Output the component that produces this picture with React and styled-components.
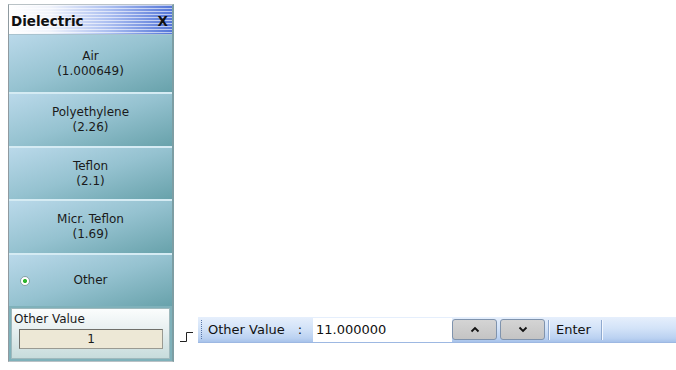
import React from "react";
import styled, { createGlobalStyle } from "styled-components";

const Global = createGlobalStyle`
  html, body { margin: 0; padding: 0; background: #ffffff; }
  body { font-family: "DejaVu Sans", "Liberation Sans", sans-serif; }
`;

const Page = styled.div`
  width: 676px;
  height: 370px;
  display: flex;
  align-items: flex-end;
  padding: 4px 0 8px 8px;
  box-sizing: border-box;
  overflow: hidden;
`;

const Panel = styled.div`
  width: 166px;
  height: 358px;
  display: flex;
  flex-direction: column;
  box-sizing: border-box;
  border: 1px solid #b9c2c6;
  border-left: 1px solid #8f9aa0;
  border-right: 2px solid #7d9ea4;
  background: #7fb1ba;
`;

const TitleBar = styled.div`
  height: 30px;
  flex: none;
  box-sizing: border-box;
  display: flex;
  align-items: center;
  justify-content: space-between;
  padding: 2px 4px 0 2px;
  font-weight: bold;
  font-size: 13.5px;
  color: #111;
  background:
    repeating-linear-gradient(to bottom, rgba(255,255,255,0.6) 0 1px, rgba(255,255,255,0) 1px 3px),
    linear-gradient(to right, #ffffff 0%, #f0f3fb 25%, #a9bdf0 62%, #5476d8 100%);
  border-bottom: 1px solid #a9c3cf;
`;

const Choice = styled.div`
  height: ${p => p.$h}px;
  flex: none;
  box-sizing: border-box;
  display: flex;
  flex-direction: column;
  align-items: center;
  justify-content: center;
  position: relative;
  font-size: 12px;
  line-height: 15px;
  color: #1a1a1a;
  background: linear-gradient(to bottom right, #bad9ea 0%, #95c2d0 50%, #68a2ab 100%);
  border-top: ${p => (p.$first ? "0" : "2px solid #d5ebf3")};
`;

const Radio = styled.span`
  position: absolute;
  left: 11px;
  top: 50%;
  margin-top: -5px;
  width: 8px;
  height: 8px;
  border-radius: 50%;
  border: 1px solid #8aa2a8;
  background: radial-gradient(circle, #2fb52f 0 1.8px, #ffffff 2.3px);
`;

const ValueBox = styled.div`
  flex: 1;
  margin: 2px;
  border: 1px solid #9fb9bd;
  background: linear-gradient(to bottom, #fbfdfd 0%, #e8f0f1 40%, #c7dcdc 100%);
  display: flex;
  flex-direction: column;
  padding: 3px 6px 4px 2px;
  font-size: 12px;
  color: #1a1a1a;
`;

const ValueField = styled.div`
  margin-top: 3px;
  margin-left: 5px;
  height: 18px;
  border: 1px solid #9a9a92;
  border-top-color: #6f6f6a;
  border-left-color: #6f6f6a;
  background: #ede8d6;
  display: flex;
  align-items: center;
  justify-content: center;
  font-size: 12px;
`;

const Connector = styled.svg`
  flex: none;
  margin: 0 0 19px 6px;
`;

const Toolbar = styled.div`
  flex: 1;
  height: 26px;
  margin: 0 0 19px 5px;
  display: flex;
  align-items: center;
  box-sizing: border-box;
  background: linear-gradient(to bottom, #e6effc 0%, #d3e3f8 45%, #bad1f1 85%, #a7c2ea 100%);
  border-bottom: 1px solid #9db8e2;
  font-size: 13px;
  color: #111;
`;

const Grip = styled.span`
  width: 0;
  height: 19px;
  margin: 0 6px 0 3px;
  border-left: 1px dotted #5a76a8;
`;

const Label = styled.span`
  width: 105px;
  display: flex;
  white-space: pre;
`;

const Colon = styled.span`
  margin-left: 13px;
`;

const Input = styled.div`
  width: 139px;
  height: 24px;
  background: #fff;
  display: flex;
  align-items: center;
  padding-left: 3px;
  box-sizing: border-box;
`;

const StepBtn = styled.button`
  width: 45px;
  height: 21px;
  margin-left: ${p => p.$ml}px;
  padding: 0;
  border: 1px solid #7f93ad;
  border-radius: 3px;
  background: linear-gradient(to bottom, #d4d4d4, #c4c4c4);
  display: flex;
  align-items: center;
  justify-content: center;
  color: #111;
`;

const Sep = styled.span`
  width: 1px;
  height: 20px;
  background: #8fa9cf;
  box-shadow: 1px 0 0 #f4f8fe;
  margin: 0 ${p => p.$mr}px 0 ${p => p.$ml}px;
`;

const Caret = ({ up }) => (
  <svg width="10" height="7" viewBox="0 0 10 7">
    <path d={up ? "M1.5 5.5 L5 2 L8.5 5.5" : "M1.5 1.5 L5 5 L8.5 1.5"} fill="none" stroke="#111" strokeWidth="1.8" />
  </svg>
);

const options = [
  ["Air", "(1.000649)", 57],
  ["Polyethylene", "(2.26)", 54],
  ["Teflon", "(2.1)", 53],
  ["Micr. Teflon", "(1.69)", 54],
];

export default function App() {
  return (
    <>
      <Global />
      <Page>
        <Panel>
          <TitleBar>
            <span>Dielectric</span>
            <span>X</span>
          </TitleBar>
          {options.map(([name, val, h], i) => (
            <Choice key={name} $first={i === 0} $h={h}>
              <span>{name}</span>
              <span>{val}</span>
            </Choice>
          ))}
          <Choice $h={53}>
            <Radio />
            <span>Other</span>
          </Choice>
          <ValueBox>
            <span>Other Value</span>
            <ValueField>1</ValueField>
          </ValueBox>
        </Panel>
        <Connector width="13" height="12" viewBox="0 0 13 12">
          <path d="M0 10.5 H6.5 V1.5 H13" fill="none" stroke="#222" strokeWidth="1" />
        </Connector>
        <Toolbar>
          <Grip />
          <Label>
            <span>Other Value</span>
            <Colon>:</Colon>
          </Label>
          <Input>11.000000</Input>
          <StepBtn $ml={0}><Caret up /></StepBtn>
          <StepBtn $ml={3}><Caret /></StepBtn>
          <Sep $ml={3} $mr={7} />
          <span>Enter</span>
          <Sep $ml={10} $mr={0} />
        </Toolbar>
      </Page>
    </>
  );
}
